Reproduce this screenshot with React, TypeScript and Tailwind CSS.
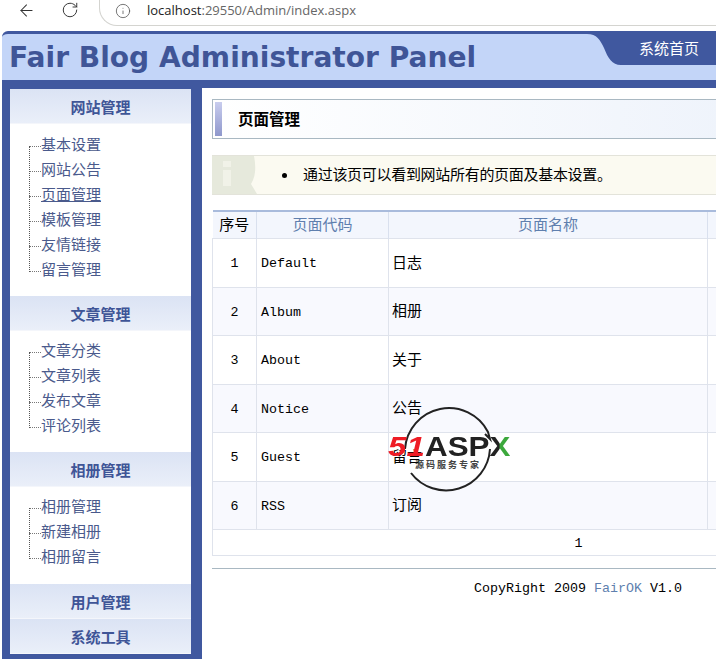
import { ArrowLeft, Info, RotateCw } from 'lucide-react';

const cjk = "font-['Liberation_Mono','Noto_Sans_CJK_SC',monospace]";

const menus = [
  { title: '网站管理', items: ['基本设置', '网站公告', '页面管理', '模板管理', '友情链接', '留言管理'], bodyClass: 'h-[172px] pt-[10px]' },
  { title: '文章管理', items: ['文章分类', '文章列表', '发布文章', '评论列表'], bodyClass: 'h-[121px] pt-[9px]' },
  { title: '相册管理', items: ['相册管理', '新建相册', '相册留言'], bodyClass: 'h-[97px] pt-[9px]' },
  { title: '用户管理', items: [], bodyClass: '' },
  { title: '系统工具', items: [], bodyClass: '' },
];

const rows = [
  ['1', 'Default', '日志'],
  ['2', 'Album', '相册'],
  ['3', 'About', '关于'],
  ['4', 'Notice', '公告'],
  ['5', 'Guest', '留言'],
  ['6', 'RSS', '订阅'],
];

function SideMenu({ title, items, bodyClass }: { title: string; items: string[]; bodyClass: string }) {
  return (
    <div>
      <div className="h-[35px] bg-gradient-to-b from-[#dbe3f4] to-[#eaeff9] border-b border-[#f4f6fb] flex items-center justify-center text-[15px] font-bold text-[#3f5597] pt-[9px]">
        {title}
      </div>
      {items.length > 0 && (
        <div className={`${bodyClass} bg-white pl-[19px]`}>
          <ul className="relative">
            {/* dotted tree line */}
            <li className="absolute left-0 top-[12px] bottom-[12px] border-l border-dotted border-[#555]" />
            {items.map((item) => (
              <li key={item} className="h-[25px] flex items-center">
                <span className="w-[12px] border-t border-dotted border-[#777]" />
                <span className={`text-[15px] leading-[25px] text-[#4a5a8c] ${item === '页面管理' && title === '网站管理' ? 'underline' : ''}`}>
                  {item}
                </span>
              </li>
            ))}
          </ul>
        </div>
      )}
    </div>
  );
}

function Watermark() {
  return (
    <div className="absolute left-[388px] top-[403px] w-[124px] h-[92px]">
      <svg className="absolute left-[14px] top-0" width="92" height="92" viewBox="0 0 92 92">
        <path d="M 3 46 A 44 44 0 0 1 86 29 L 88 36 L 83 31" fill="none" stroke="#222" strokeWidth="2" />
        <path d="M 88 46 A 44 44 0 0 1 9 70" fill="none" stroke="#222" strokeWidth="2" />
      </svg>
      <div className="absolute left-0 top-[30px] flex items-baseline font-['Liberation_Sans',sans-serif] font-bold leading-[28px] text-[28px]">
        <span className="italic text-[#ee1c25] w-[37px] inline-block origin-left scale-x-[1.18]">51</span>
        <span className="inline-block origin-left scale-x-[1.12] text-[#222] whitespace-nowrap">
          ASP
          <span className="bg-gradient-to-r from-[#222] from-50% to-[#3ca83c] to-50% bg-clip-text text-transparent">X</span>
        </span>
      </div>
      <div className="absolute left-[27px] top-[56px] text-[9px] leading-[12px] tracking-[2px] font-bold text-[#444] font-['Noto_Sans_CJK_SC',sans-serif] whitespace-nowrap">
        源码服务专家
      </div>
    </div>
  );
}

export default function App() {
  return (
    <div className={`relative w-[716px] h-[659px] overflow-hidden bg-white text-black ${cjk}`}>
      {/* browser bar */}
      <div className="h-[27px] flex items-start">
        <ArrowLeft className="ml-[17px] mt-[1px] text-[#333]" size={19} strokeWidth={1.3} />
        <RotateCw className="ml-[25px] mt-[1px] text-[#333]" size={18} strokeWidth={1.3} />
        <div className="ml-[20px] -mt-[10px] flex-1 h-[36px] rounded-bl-[18px] border border-r-0 border-t-0 border-[#d4d4d0] flex items-center pl-[15px] pt-[7px] font-['Open_Sans','Liberation_Sans',sans-serif] text-[13px]">
          <Info className="text-[#555]" size={16} strokeWidth={1.2} />
          <span className="ml-[16px] text-[#222]">localhost</span>
          <span className="text-[#666]">:29550/Admin/index.aspx</span>
        </div>
      </div>

      {/* top banner */}
      <header className="ml-[2px] mt-[4px] h-[57px] bg-[#c3d5f8] border-t-[3px] border-b-[8px] border-[#40589f] rounded-tl-[6px] relative">
        <div className="pl-[7px] pt-[3px] font-['DejaVu_Sans',sans-serif] font-bold text-[28.1px] leading-[42px] text-[#3f5597] whitespace-nowrap">
          Fair Blog Administrator Panel
        </div>
        <div className="absolute right-0 top-0 w-[96px] h-[31px] bg-[#40589f] pl-[19px] pt-[5px] text-[15px] leading-[24px] text-white">
          系统首页
        </div>
        <svg className="absolute right-[95px] top-0" width="34" height="31" viewBox="0 0 34 31">
          <path d="M0 0 C10 0 13 6 17 14 C21 24 25 31 34 31 L34 0 Z" fill="#40589f" />
        </svg>
      </header>

      <div className="flex">
        {/* sidebar */}
        <aside className="ml-[2px] w-[200px] shrink-0 h-[571px] bg-[#40589f] pl-[8px] pr-[11px] pt-[1px]">
          {menus.map((menu) => (
            <SideMenu key={menu.title} title={menu.title} items={menu.items} bodyClass={menu.bodyClass} />
          ))}
        </aside>

        {/* main */}
        <main className="ml-[10px] w-[540px] shrink-0">
          <div className="mt-[11px] h-[40px] border border-[#a9b8c2] bg-gradient-to-r from-white to-[#eef3fb] p-[2px] flex items-center">
            <div className="w-[7px] h-full bg-gradient-to-b from-[#c9cdee] to-[#8f98cc]" />
            <h1 className="ml-[16px] pt-[5px] text-[15.5px] font-bold">页面管理</h1>
          </div>

          <div className="mt-[16px] h-[40px] bg-[#fbfaf1] border-y border-[#e3e3da] flex items-center">
            <svg width="46" height="38" viewBox="0 0 46 38" className="shrink-0">
              <path d="M0 0 H42 C44 10 44 20 39 28 L45 38 H26 C14 38 0 38 0 38 Z" fill="#e6e9dc" />
              <rect x="11" y="5" width="8" height="6" fill="#f1f2e8" />
              <rect x="11" y="14" width="8" height="16" fill="#f1f2e8" />
            </svg>
            <span className="ml-[24px] mr-[16px] w-[5px] h-[5px] rounded-full bg-black shrink-0" />
            <span className="pt-[4px] text-[15px] whitespace-nowrap tracking-[-0.3px]">通过该页可以看到网站所有的页面及基本设置。</span>
          </div>

          <table className="mt-[15px] w-[540px] table-fixed border-collapse text-[13.33px] leading-[18px]">
            <colgroup>
              <col className="w-[44px]" />
              <col className="w-[132px]" />
              <col className="w-[319px]" />
              <col />
            </colgroup>
            <thead>
              <tr className="h-[27px] bg-[#f3f6fd] border-t-2 border-[#a9bbdc] text-[15px] font-normal">
                <th className="p-0 pt-[4px] font-normal border-r border-[#d9e0ee]">序号</th>
                <th className="p-0 pt-[4px] font-normal text-[#5f7fae] border-r border-[#d9e0ee]">页面代码</th>
                <th className="p-0 pt-[4px] font-normal text-[#5f7fae] border-r border-[#d9e0ee]">页面名称</th>
                <th />
              </tr>
            </thead>
            <tbody>
              {rows.map((row, i) => (
                <tr key={row[0]} className={`${i % 2 ? 'h-[48px]' : 'h-[49px]'} border-t border-[#dfe3ec] ${i % 2 ? 'bg-[#f8f9fe]' : 'bg-white'}`}>
                  <td className="pt-[3px] text-center border-x border-[#dfe3ec]">{row[0]}</td>
                  <td className="pt-[3px] pl-[4px] border-r border-[#dfe3ec]">{row[1]}</td>
                  <td className="pt-[4px] pl-[3px] border-r border-[#dfe3ec] text-[15px]">{row[2]}</td>
                  <td />
                </tr>
              ))}
              <tr className="h-[26px] border-y border-[#dfe3ec]">
                <td colSpan={4} className="pt-[3px] border-l border-[#dfe3ec] text-center">
                  <span className="relative left-[96px]">1</span>
                </td>
              </tr>
            </tbody>
          </table>

          <footer className="mt-[12px] border-t border-[#a9b8c2] pt-[12px] pl-[262px] text-[13.33px] leading-[16px] whitespace-nowrap">
            CopyRight 2009 <span className="text-[#5f7fae]">FairOK</span> V1.0
          </footer>
        </main>
      </div>

      <Watermark />
    </div>
  );
}
